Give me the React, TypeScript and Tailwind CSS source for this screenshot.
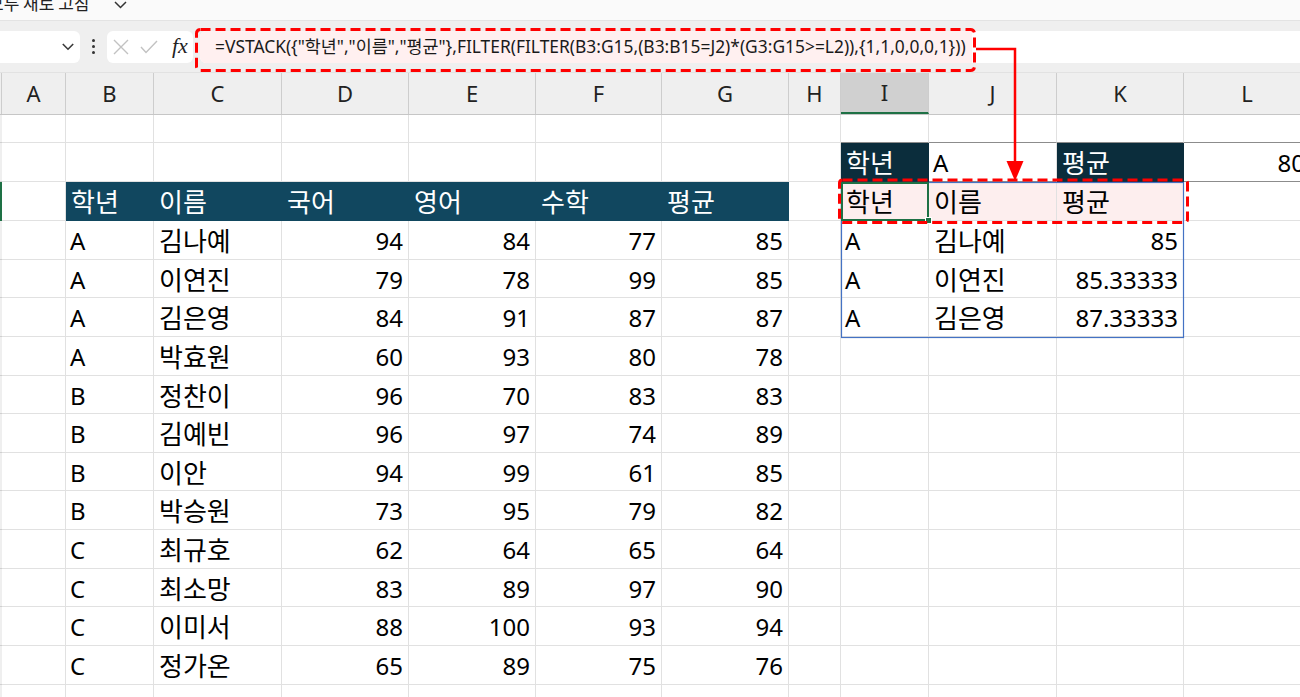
import React from "react";

const W = [
  "w-[2px]",
  "w-[64px]",
  "w-[88px]",
  "w-[128px]",
  "w-[127px]",
  "w-[127px]",
  "w-[126px]",
  "w-[127px]",
  "w-[52px]",
  "w-[88px]",
  "w-[128px]",
  "w-[127px]",
  "w-[127px]",
];

const H = [
  "h-[28px]",
  "h-[39px]",
  "h-[39px]",
  "h-[39px]",
  "h-[38px]",
  "h-[39px]",
  "h-[39px]",
  "h-[38px]",
  "h-[39px]",
  "h-[38px]",
  "h-[39px]",
  "h-[39px]",
  "h-[38px]",
  "h-[39px]",
  "h-[39px]",
  "h-[39px]",
];

const LETTERS = ["", "A", "B", "C", "D", "E", "F", "G", "H", "I", "J", "K", "L"];

type Cell = { t?: string; r?: boolean; cls?: string; dark?: boolean };

const DATA: (string | number)[][] = [
  ["A", "김나예", 94, 84, 77, 85],
  ["A", "이연진", 79, 78, 99, 85],
  ["A", "김은영", 84, 91, 87, 87],
  ["A", "박효원", 60, 93, 80, 78],
  ["B", "정찬이", 96, 70, 83, 83],
  ["B", "김예빈", 96, 97, 74, 89],
  ["B", "이안", 94, 99, 61, 85],
  ["B", "박승원", 73, 95, 79, 82],
  ["C", "최규호", 62, 64, 65, 64],
  ["C", "최소망", 83, 89, 97, 90],
  ["C", "이미서", 88, 100, 93, 94],
  ["C", "정가온", 65, 89, 75, 76],
];

const RESULT: string[][] = [
  ["A", "김나예", "85"],
  ["A", "이연진", "85.33333"],
  ["A", "김은영", "87.33333"],
];

const LEFT_HDR = "bg-[#11475f] text-white border-[#11475f]";
const RIGHT_HDR = "bg-[#0b2d3c] text-white border-[#0b2d3c]";
const PINK = "bg-[#fdeeee]";

function buildRows(): Cell[][] {
  const rows: Cell[][] = [];
  for (let r = 0; r < 16; r++) {
    const row: Cell[] = [];
    for (let c = 0; c < 13; c++) row.push({});
    rows.push(row);
  }
  for (let c = 9; c <= 12; c++) rows[0][c].cls = "border-b-[#8c8c8c]";
  rows[1][9] = { t: "학년", cls: RIGHT_HDR, dark: true };
  rows[1][10] = { t: "A", cls: "border-b-[#8c8c8c]" };
  rows[1][11] = { t: "평균", cls: RIGHT_HDR, dark: true };
  rows[1][12] = { t: "80", r: true, cls: "border-b-[#8c8c8c]" };
  const hdr = ["학년", "이름", "국어", "영어", "수학", "평균"];
  hdr.forEach((h, i) => {
    rows[2][2 + i] = { t: h, cls: LEFT_HDR, dark: true };
  });
  rows[2][9] = { t: "학년", cls: PINK };
  rows[2][10] = { t: "이름", cls: PINK };
  rows[2][11] = { t: "평균", cls: PINK };
  DATA.forEach((d, i) => {
    const r = 3 + i;
    rows[r][2] = { t: String(d[0]) };
    rows[r][3] = { t: String(d[1]) };
    for (let k = 2; k < 6; k++) rows[r][2 + k] = { t: String(d[k]), r: true };
  });
  RESULT.forEach((d, i) => {
    const r = 3 + i;
    rows[r][9] = { t: d[0] };
    rows[r][10] = { t: d[1] };
    rows[r][11] = { t: d[2], r: true };
  });
  return rows;
}

const ROWS = buildRows();
const KOREAN = /[가-힣]/;

function FormulaBar() {
  return (
    <div className="h-[51px] bg-[#efefef] flex items-center">
      <div className="w-[80px] h-[32px] bg-white rounded-r-[6px] flex items-center justify-end pr-[6px]">
        <svg width="12" height="8" viewBox="0 0 12 8">
          <polyline points="0.8,1 6,6.2 11.2,1" fill="none" stroke="#3a3a3a" strokeWidth="1.6" />
        </svg>
      </div>
      <div className="w-[27px] flex flex-col items-center gap-[3px]">
        <span className="w-[3px] h-[3px] rounded-full bg-[#333]" />
        <span className="w-[3px] h-[3px] rounded-full bg-[#333]" />
        <span className="w-[3px] h-[3px] rounded-full bg-[#333]" />
      </div>
      <div className="w-[86px] h-[32px] bg-white rounded-[6px] flex items-center pl-[6px]">
        <svg width="16" height="16" viewBox="0 0 16 16">
          <path d="M1 1 L15 15 M15 1 L1 15" stroke="#c2c2c2" strokeWidth="1.4" />
        </svg>
        <svg width="18" height="14" viewBox="0 0 18 14" className="ml-[11px]">
          <polyline points="1,7 6,12.5 17,1" fill="none" stroke="#c2c2c2" strokeWidth="1.4" />
        </svg>
        <span className="ml-[14px] font-['Liberation_Serif',serif] italic text-[22px] leading-none text-[#222] -mt-[2px]">
          fx
        </span>
      </div>
      <div className="ml-[7px] flex-1 h-[32px] bg-white rounded-l-[6px] flex items-stretch overflow-hidden">
        <div className="w-[772px] bg-[#fff0f0] flex items-center pl-[15px] whitespace-nowrap text-[17.4px] text-[#1a1a1a] font-['Noto_Sans','Noto_Sans_CJK_KR',sans-serif]">
          {'=VSTACK({"학년","이름","평균"},FILTER(FILTER(B3:G15,(B3:B15=J2)*(G3:G15>=L2)),{1,1,0,0,0,1}))'}
        </div>
      </div>
    </div>
  );
}

function ColumnHeaders() {
  return (
    <div className="flex h-[43px] bg-[#efefef] border-t border-[#e2e2e2] border-b border-b-[#c6c6c6]">
      {LETTERS.map((l, i) => (
        <div
          key={i}
          className={`${W[i]} shrink-0 h-full flex items-center justify-center border-r border-[#cdcdcd] text-[22px] text-[#222] ${
            i === 9 ? "bg-[#d0d0d0] border-b-2 border-b-[#1e7145]" : ""
          }`}
        >
          {l}
        </div>
      ))}
    </div>
  );
}

export default function App() {
  return (
    <div className="relative w-[1300px] h-[697px] overflow-hidden bg-white font-['Noto_Sans','Noto_Sans_CJK_KR',sans-serif] text-black">
      <div className="h-[20px] bg-[#fafafa] overflow-hidden">
        <div className="flex items-center -mt-[7px] -ml-[12px]">
          <span className="text-[17px] leading-[20px] text-[#222] font-['Noto_Sans_CJK_KR',sans-serif]">모두 새로 고침</span>
          <svg width="13" height="8" viewBox="0 0 13 8" className="ml-[25px] mt-[3px]">
            <polyline points="1,1 6.5,6.5 12,1" fill="none" stroke="#333" strokeWidth="1.5" />
          </svg>
        </div>
      </div>
      <div className="h-px bg-[#e3e3e3]" />
      <FormulaBar />
      <ColumnHeaders />
      <div className="flex flex-col">
        {ROWS.map((row, r) => (
          <div key={r} className={`flex ${H[r]} shrink-0`}>
            {row.map((cell, c) => {
              if (c === 0) {
                return (
                  <div
                    key={c}
                    className={`${W[0]} shrink-0 h-full ${r === 2 ? "bg-[#1e7145]" : "bg-[#efefef] border-b border-[#d0d0d0]"}`}
                  />
                );
              }
              const ko = cell.t ? KOREAN.test(cell.t) : false;
              return (
                <div
                  key={c}
                  className={`${W[c]} shrink-0 h-full border-r border-b ${cell.dark ? "" : "border-[#e1e1e1]"} flex items-center pt-[2px] whitespace-nowrap overflow-hidden leading-none ${
                    ko ? "text-[26px]" : "text-[24px]"
                  } ${cell.r ? "justify-end pr-[5px]" : ko ? "justify-start pl-[5px]" : "justify-start pl-[4px]"} ${cell.cls ?? ""}`}
                >
                  {cell.t ?? ""}
                </div>
              );
            })}
          </div>
        ))}
      </div>

      <svg
        className="absolute left-0 top-0 pointer-events-none"
        width="1300"
        height="697"
        viewBox="0 0 1300 697"
      >
        <rect x="841.5" y="182.5" width="342" height="155" fill="none" stroke="#4472c4" strokeWidth="1.2" />
        <rect x="842" y="183" width="86" height="37" fill="none" stroke="#1e7145" strokeWidth="2" />
        <rect x="925.5" y="217.5" width="6" height="6" fill="#1e7145" stroke="#ffffff" strokeWidth="1" />
        <rect
          x="196.5"
          y="29.5"
          width="778"
          height="41"
          rx="4"
          fill="none"
          stroke="#ff0000"
          strokeWidth="3"
          strokeDasharray="10 5"
        />
        <path d="M976 49 H1015 V164" fill="none" stroke="#ff0000" strokeWidth="2.5" />
        <polygon points="1006.5,161 1023.5,161 1015,181" fill="#ff0000" />
        <rect
          x="839.5"
          y="180"
          width="348"
          height="42.5"
          rx="3"
          fill="none"
          stroke="#ff0000"
          strokeWidth="3"
          strokeDasharray="10 5"
        />
      </svg>
    </div>
  );
}
